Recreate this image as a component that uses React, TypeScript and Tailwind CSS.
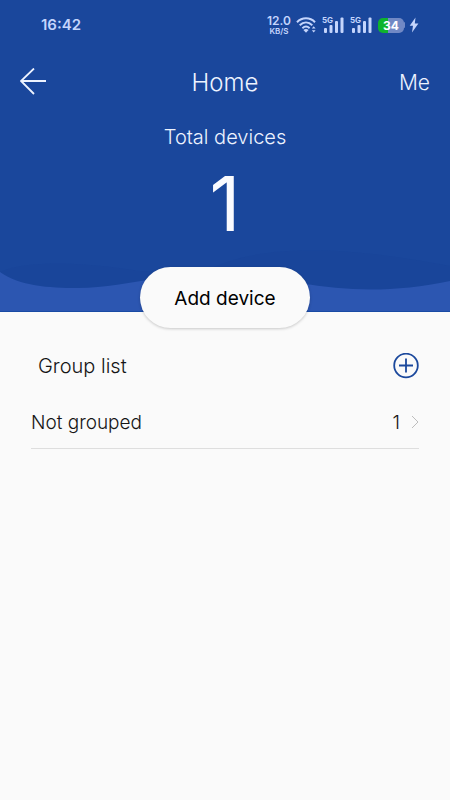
import { ReactNode } from 'react'

interface Group {
  id: string
  name: string
  count: number
}

const groups: Group[] = [{ id: 'none', name: 'Not grouped', count: 1 }]

function WifiIcon() {
  return (
    <svg viewBox="0 0 23 18" className="h-[18px] w-[23px]" fill="none" stroke="currentColor" aria-hidden="true">
      <path d="M1 6.2C6 1 14 1 19 6.2" strokeWidth="2" />
      <path d="M3.7 9.3C7.5 5.6 12.5 5.6 16.3 9.3" strokeWidth="2" />
      <path d="M6.4 12.2C8.7 10.1 11.3 10.1 13.6 12.2" strokeWidth="2" />
      <path d="M7.4 14.1C8.9 12.7 11.1 12.7 12.6 14.1L10 16.8Z" fill="currentColor" stroke="none" />
      <path d="M15.8 12.4L17.7 10.2L19.6 12.4ZM15.8 14.2H19.6L17.7 16.4Z" fill="currentColor" stroke="none" />
    </svg>
  )
}

function SignalIcon() {
  return (
    <span className="relative block h-[18px] w-[22px]">
      <svg viewBox="0 0 22 18" className="h-full w-full" fill="currentColor" aria-hidden="true">
        <rect x="2" y="12" width="3" height="5" rx="1" />
        <rect x="7.5" y="9" width="3" height="8" rx="1" />
        <rect x="13" y="5" width="3" height="12" rx="1" />
        <rect x="18.5" y="1.5" width="3" height="15.5" rx="1" />
      </svg>
      <span className="absolute left-0 top-0 text-[8px] font-bold leading-[8px]">5G</span>
    </span>
  )
}

function StatusBar() {
  return (
    <div className="flex h-[50px] items-center justify-between pl-[41px] pr-[31px] text-[#c5d5fc]">
      <span className="text-[15px] font-semibold">16:42</span>
      <div className="flex items-center">
        <div className="mr-[5px] flex w-6 flex-col items-center font-semibold">
          <span className="text-[12px] leading-[12px]">12.0</span>
          <span className="text-[8px] leading-[8px]">KB/S</span>
        </div>
        <WifiIcon />
        <div className="ml-[3px] flex gap-[6px]">
          <SignalIcon />
          <SignalIcon />
        </div>
        <div className="ml-[6px] flex items-center">
          <span className="flex h-[15px] w-[26px] items-center justify-center rounded-[5px] bg-linear-to-r from-[#0fb32c] from-40% to-[#7189c5] to-40% text-[12px] font-bold leading-[15px] text-white">
            34
          </span>
          <span className="h-1.5 w-px rounded-r bg-[#7189c5]" />
        </div>
        <svg viewBox="0 0 10 16" className="ml-1 h-4 w-[10px]" fill="currentColor" aria-label="Charging">
          <path d="M6.5 0.5L0.7 8.8H4L3 15.5L9.4 6.6H5.8Z" />
        </svg>
      </div>
    </div>
  )
}

function Waves() {
  return (
    <svg viewBox="0 0 450 64" preserveAspectRatio="none" className="block h-16 w-full" aria-hidden="true">
      <path d="M0 24C16 16 60 10 140 23L200 26C250 -3 330 -5 450 18V64H0Z" fill="#19459a" />
      <path d="M0 24C20 38 48 40 78 40C105 40 130 34 155 31C195 27 245 30 300 35C350 44 398 44 450 33V64H0Z" fill="#2c56b1" />
      <rect y="63" width="450" height="1" fill="#194aa4" />
    </svg>
  )
}

function ListRow({ children }: { children: ReactNode }) {
  return <li className="border-b border-[#dedede]">{children}</li>
}

export default function App() {
  return (
    <div className="min-h-screen bg-[#fafafa] font-['Inter',sans-serif] font-light text-[#151515]">
      <header className="bg-[#1a479c] text-[#edf3ff]">
        <StatusBar />
        <nav className="grid h-16 grid-cols-3 items-center px-5">
          <button type="button" aria-label="Back" className="justify-self-start">
            <svg viewBox="0 0 28 28" className="h-7 w-7" fill="none" stroke="currentColor" strokeWidth="1.8">
              <path d="M26 13H1M14 0.5L1 13L14 26" />
            </svg>
          </button>
          <h1 className="justify-self-center pt-0.5 text-2xl">Home</h1>
          <button type="button" className="justify-self-end pt-0.5 text-[21px]">
            Me
          </button>
        </nav>
        <div className="flex h-[134px] flex-col items-center pt-2">
          <h2 className="text-xl leading-[30px]">Total devices</h2>
          <p className="mt-[11px] text-[76px] font-normal leading-[80px] text-[#fafbff]">1</p>
        </div>
        <Waves />
      </header>

      <main>
        <div className="relative -mt-[45px] flex justify-center">
          <button
            type="button"
            className="h-[61px] w-[170px] rounded-full bg-[#fafafa] pt-[3px] text-[19px] font-normal text-black shadow-[0_1px_3px_rgba(0,0,0,0.2)]"
          >
            Add device
          </button>
        </div>

        <section className="px-[31px] pt-4">
          <div className="flex h-11 items-center justify-between pl-[7px]">
            <h2 className="text-xl">Group list</h2>
            <button type="button" aria-label="Add group" className="text-[#1b489c]">
              <svg viewBox="0 0 26 26" className="h-[26px] w-[26px]" fill="none" stroke="currentColor" strokeWidth="1.8">
                <circle cx="13" cy="12.5" r="11.8" />
                <path d="M13 5.5V19.5M6 12.5H20" />
              </svg>
            </button>
          </div>
          <ul>
            {groups.map((group) => (
              <ListRow key={group.id}>
                <button type="button" className="mt-2 flex h-[52px] w-full items-center text-[19px]">
                  <span className="pt-0.5">{group.name}</span>
                  <span className="ml-auto mr-[11px] pt-0.5">{group.count}</span>
                  <svg viewBox="0 0 8 14" className="h-[14px] w-2" fill="none" stroke="#bdbdbd" aria-hidden="true">
                    <path d="M1 1L7 7L1 13" />
                  </svg>
                </button>
              </ListRow>
            ))}
          </ul>
        </section>
      </main>
    </div>
  )
}
